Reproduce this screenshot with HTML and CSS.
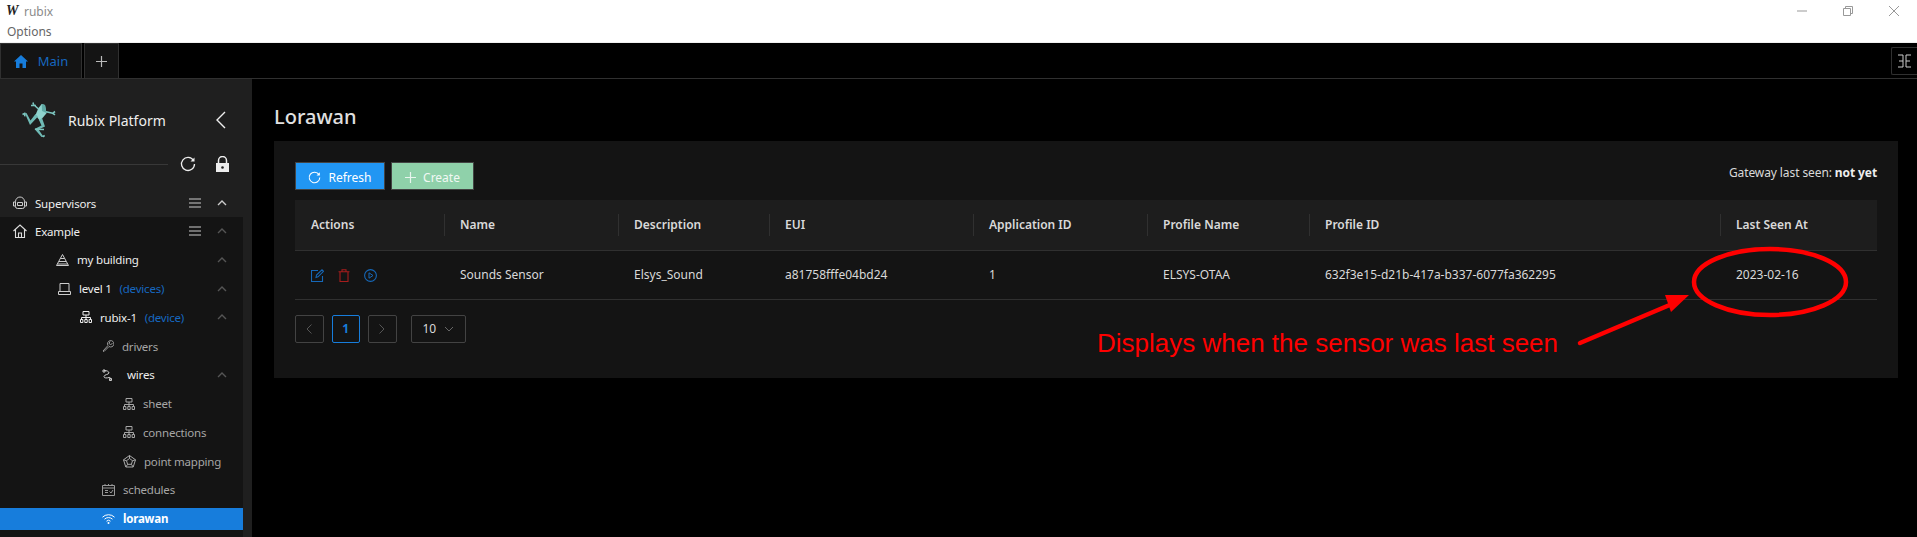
FILE: index.html
```html
<!DOCTYPE html>
<html lang="en">
<head>
  <meta charset="UTF-8">
  <title>rubix</title>
  <link rel="stylesheet" href="styles.css">
</head>
<body>
  <svg class="sprites" width="0" height="0">
    <symbol id="i-chev" viewBox="0 0 10 6"><path d="M1 5l4-4 4 4" fill="none" stroke="currentColor" stroke-width="1.4"/></symbol>
    <symbol id="i-menu" viewBox="0 0 12 10"><path d="M0 1h12M0 5h12M0 9h12" fill="none" stroke="currentColor" stroke-width="1.2"/></symbol>
    <symbol id="i-net" viewBox="0 0 12 12"><path d="M3 .5h6v3.5H3zM6 4v2.5M1.5 8.500V6.500h9v2M.5 8.500h2.400v3H.5zM4.800 8.500h2.400v3H4.800zM9.100 8.500h2.400v3H9.100zM6 6.500v2" fill="none" stroke="currentColor"/></symbol>
    <symbol id="i-refresh" viewBox="0 0 16 16"><path d="M13.500 4.500A6.500 6.500 0 1 0 14.500 8" fill="none" stroke="currentColor" stroke-width="1.300"/><path d="M14.500 1.500v4h-4z" fill="currentColor"/></symbol>
  </svg>

  <header class="titlebar">
    <span class="app-icon">W</span>
    <span class="app-name">rubix</span>
    <div class="window-btns">
      <svg width="10" height="10" viewBox="0 0 10 10"><path d="M0 5h10" stroke="#999"/></svg>
      <svg width="10" height="10" viewBox="0 0 10 10"><path d="M.5 2.500h7v7h-7zM2.500 2.500v-2h7v7h-2" fill="none" stroke="#999"/></svg>
      <svg width="10" height="10" viewBox="0 0 10 10"><path d="M0 0l10 10M10 0L0 10" stroke="#999"/></svg>
    </div>
  </header>
  <div class="menubar">Options</div>

  <nav class="tabs">
    <div class="tab tab-main">
      <svg width="14" height="13" viewBox="0 0 14 13"><path d="M7 0L0 6.500h2V13h3.500V8.500h3V13H12V6.500h2z" fill="#177ddc"/></svg>
      <span>Main</span>
    </div>
    <div class="tab tab-add">
      <svg width="11" height="11" viewBox="0 0 11 11"><path d="M5.500 0v11M0 5.500h11" stroke="#bbb" stroke-width="1.200"/></svg>
    </div>
    <div class="tab-layout">
      <svg width="15" height="14" viewBox="0 0 15 14"><path d="M1 1h5v12H1M14 1H9v12h5M2 7h4M9 7h4" fill="none" stroke="#ccc"/></svg>
    </div>
  </nav>

  <div class="workspace">
    <aside class="sidebar">
      <div class="brand">
        <svg class="frog" width="36" height="36" viewBox="0 0 36 36">
          <polygon points="19.700,2 23,3 24.500,11.300 18,19 13.500,13 16.300,6.300" fill="#8fd3cd"/>
          <polygon points="19.700,2 23,3 24.500,11 20,9" fill="#5fa9a4"/>
          <polygon points="13.500,12 16,14.500 8,23 3,11.500 4.500,11 8.500,18.500" fill="#6fbab5"/>
          <polygon points="17,18 20,16 23,24.500 16.500,27.500 21.500,34.700 19.500,35 12.500,27 19.500,23.500" fill="#6fbab5"/>
          <path d="M16.500 7L11.500 2.500M9 3.500h5M11.500 2.500L11 .5M.5 12.500l3-1.500M3 11.300l-.3 3M24 9.700l6.700 1.600M30.700 11.300l2.300-1.800M30.700 11.300l2.300 1.500M20.700 34.700l2-1.200M13 27.300l9 .2" fill="none" stroke="#7cc5bf" stroke-width="1.600"/>
        </svg>
        <span class="brand-name">Rubix Platform</span>
        <svg class="brand-back" width="11" height="18" viewBox="0 0 11 18"><path d="M10 1L2 9l8 8" fill="none" stroke="#eee" stroke-width="1.400"/></svg>
      </div>
      <div class="tools">
        <div class="tools-line"></div>
        <svg class="tool-refresh" width="16" height="16"><use href="#i-refresh"/></svg>
        <svg class="tool-lock" width="15" height="16" viewBox="0 0 15 16"><path d="M3.500 7V4.500a4 4 0 0 1 8 0V7" fill="none" stroke="#eee" stroke-width="1.500"/><path d="M1 7h13v9H1z" fill="#eee"/><circle cx="7.500" cy="11.500" r="1.300" fill="#1f1f1f"/></svg>
      </div>
      <div class="sup-wrap">
        <div class="row row-top">
          <svg class="row-icon" width="14" height="14" viewBox="0 0 14 14"><path d="M2.500 5.500a4.500 4.500 0 0 1 9 0v5a2 2 0 0 1-2 2h-5a2 2 0 0 1-2-2zM.5 6h2v4h-2zM11.500 6h2v4h-2zM4.500 6.500h5v3h-5z" fill="none" stroke="#ccc"/></svg>
          <span class="row-text">Supervisors</span>
          <svg class="row-menu" width="12" height="10"><use href="#i-menu"/></svg>
          <svg class="row-chev chev-bright" width="10" height="6"><use href="#i-chev"/></svg>
        </div>
      </div>
      <div class="tree">
        <div class="row row-top">
          <svg class="row-icon" width="14" height="14" viewBox="0 0 14 14"><path d="M.5 7L7 1l6.500 6M2.500 5.500v8h9v-8M5.500 13.500V9h3v4.500" fill="none" stroke="#ddd" stroke-width="1.100"/></svg>
          <span class="row-text">Example</span>
          <svg class="row-menu" width="12" height="10"><use href="#i-menu"/></svg>
          <svg class="row-chev" width="10" height="6"><use href="#i-chev"/></svg>
        </div>
        <div class="row lvl-1">
          <svg class="row-icon" width="13" height="12" viewBox="0 0 13 12"><path d="M6.500 .5L12.500 11.500H.5zM4.500 4.500h4M3 7.500h7M1.500 10h10" fill="none" stroke="#ccc"/></svg>
          <span class="row-text">my building</span>
          <svg class="row-chev" width="10" height="6"><use href="#i-chev"/></svg>
        </div>
        <div class="row lvl-2">
          <svg class="row-icon" width="13" height="12" viewBox="0 0 13 12"><path d="M2 .5h9v8H2zM.5 8.500h12v3H.5z" fill="none" stroke="#ccc"/></svg>
          <span class="row-text">level 1 <em class="row-tag">(devices)</em></span>
          <svg class="row-chev" width="10" height="6"><use href="#i-chev"/></svg>
        </div>
        <div class="row lvl-3">
          <svg class="row-icon" width="12" height="12"><use href="#i-net"/></svg>
          <span class="row-text">rubix-1 <em class="row-tag">(device)</em></span>
          <svg class="row-chev" width="10" height="6"><use href="#i-chev"/></svg>
        </div>
        <div class="row lvl-4 row-dim">
          <svg class="row-icon" width="12" height="12" viewBox="0 0 12 12"><path d="M1 11l5-5.500a3.200 3.200 0 1 1 1 1L2 11.500zM8 1.500l-1 2 1.500 1 2-1" fill="none" stroke="#999"/></svg>
          <span class="row-text">drivers</span>
        </div>
        <div class="row lvl-4 row-wires">
          <svg class="row-icon" width="11" height="12" viewBox="0 0 11 12"><path d="M2 1.500c3 0 5 1 5 2.500S2 5.500 2 7.500 5 9 7 8.500s2 2 .5 2.500M1 1h2v2H1zM7.500 9.500h2v2h-2z" fill="none" stroke="#ccc"/></svg>
          <span class="row-text">wires</span>
          <svg class="row-chev" width="10" height="6"><use href="#i-chev"/></svg>
        </div>
        <div class="row lvl-5 row-dim">
          <svg class="row-icon" width="12" height="12"><use href="#i-net"/></svg>
          <span class="row-text">sheet</span>
        </div>
        <div class="row lvl-5 row-dim">
          <svg class="row-icon" width="12" height="12"><use href="#i-net"/></svg>
          <span class="row-text">connections</span>
        </div>
        <div class="row lvl-5 row-dim">
          <svg class="row-icon" width="13" height="13" viewBox="0 0 13 13"><path d="M6.500 .5l6 4.300-2.300 7.200H2.800L.5 4.800zM6.500 3.500l3 2.200-1.100 3.600H4.600L3.500 5.700zM6.500 .5v3M12.500 4.800l-3 .9M10.200 12L8.400 9.300M2.800 12l1.800-2.700M.5 4.800l3 .9" fill="none" stroke="#aaa"/></svg>
          <span class="row-text">point mapping</span>
        </div>
        <div class="row lvl-4 row-dim">
          <svg class="row-icon" width="13" height="12" viewBox="0 0 13 12"><path d="M.5 1.500h12v10H.5zM.5 4h12M3 0v2M6.500 0v2M10 0v2M3 6.500h3M3 8.500h3M7.500 7.500l1.500 1.500 2-3" fill="none" stroke="#999"/></svg>
          <span class="row-text">schedules</span>
        </div>
        <div class="row lvl-4 row-active">
          <svg class="row-icon" width="13" height="10" viewBox="0 0 13 10"><path d="M.5 3.200a8.500 8.500 0 0 1 12 0M2.500 5.200a5.700 5.700 0 0 1 8 0M4.500 7.200a2.800 2.800 0 0 1 4 0" fill="none" stroke="#fff"/><circle cx="6.500" cy="9" r="1" fill="#fff"/></svg>
          <span class="row-text">lorawan</span>
        </div>
      </div>
    </aside>

    <main class="content">
      <h1 class="page-title">Lorawan</h1>
      <section class="panel">
        <div class="toolbar">
          <button class="btn btn-refresh"><svg width="13" height="13"><use href="#i-refresh"/></svg>Refresh</button>
          <button class="btn btn-create"><svg width="11" height="11" viewBox="0 0 11 11"><path d="M5.500 0v11M0 5.500h11" stroke="#e8f5ee" stroke-width="1.200"/></svg>Create</button>
          <div class="gateway">Gateway last seen: <b>not yet</b></div>
        </div>
        <table class="grid">
          <colgroup>
            <col class="col-actions"><col class="col-name"><col class="col-desc"><col class="col-eui">
            <col class="col-app"><col class="col-profile"><col class="col-pid"><col class="col-seen">
          </colgroup>
          <thead>
            <tr>
              <th>Actions</th><th>Name</th><th>Description</th><th>EUI</th>
              <th>Application ID</th><th>Profile Name</th><th>Profile ID</th><th>Last Seen At</th>
            </tr>
          </thead>
          <tbody>
            <tr>
              <td class="actions">
                <svg width="13" height="13" viewBox="0 0 13 13"><path d="M11.500 7v5.500H.5v-11H7M5 8.500l.5-2.500L11 .8 12.500 2.300 7 7.800z" fill="none" stroke="#1668b8" stroke-width="1.100"/></svg>
                <svg width="12" height="13" viewBox="0 0 12 13"><path d="M.5 2.800h11M4 2.500V.7h4v1.800M2 2.800v9.700h8V2.800" fill="none" stroke="#a61d1d" stroke-width="1.100"/></svg>
                <svg width="13" height="13" viewBox="0 0 13 13"><circle cx="6.500" cy="6.500" r="5.900" fill="none" stroke="#1668b8" stroke-width="1.100"/><path d="M5 3.800l4 2.700-4 2.700z" fill="none" stroke="#1668b8"/></svg>
              </td>
              <td>Sounds Sensor</td>
              <td>Elsys_Sound</td>
              <td>a81758fffe04bd24</td>
              <td>1</td>
              <td>ELSYS-OTAA</td>
              <td>632f3e15-d21b-417a-b337-6077fa362295</td>
              <td>2023-02-16</td>
            </tr>
          </tbody>
        </table>
        <div class="pager">
          <span class="page-btn"><svg width="6" height="10" viewBox="0 0 6 10"><path d="M5.500 .5L1 5l4.500 4.500" fill="none" stroke="#555"/></svg></span>
          <span class="page-btn page-current">1</span>
          <span class="page-btn"><svg width="6" height="10" viewBox="0 0 6 10"><path d="M.5 .5L5 5 .5 9.500" fill="none" stroke="#555"/></svg></span>
          <span class="page-size">10 <svg width="10" height="6" viewBox="0 0 10 6"><path d="M1 1l4 4 4-4" fill="none" stroke="#666"/></svg></span>
        </div>
      </section>
    </main>
  </div>

  <svg class="markup" width="1917" height="537" viewBox="0 0 1917 537">
    <ellipse cx="1770" cy="282" rx="76" ry="33" fill="none" stroke="#f00" stroke-width="4.500"/>
    <path d="M1580 343L1672 304" stroke="#f00" stroke-width="4.500" stroke-linecap="round"/>
    <polygon points="1689,295 1665,295 1671,312" fill="#f00"/>
  </svg>
  <div class="markup-text">Displays when the sensor was last seen</div>
</body>
</html>
```

FILE: styles.css
```css
* {
  box-sizing: border-box;
}

html, body {
  margin: 0;
  height: 100%;
}

body {
  position: relative;
  overflow: hidden;
  background: #000;
  color: #d9d9d9;
  font-family: "Noto Sans", "Open Sans", sans-serif;
  font-size: 12px;
}

.sprites {
  position: absolute;
}

/* window chrome */
.titlebar {
  display: flex;
  align-items: center;
  height: 22px;
  padding-left: 6px;
  background: #fff;
  color: #8a8a8a;
  font-size: 12px;
}

.app-icon {
  width: 12px;
  margin-right: 6px;
  color: #222;
  font-family: "Liberation Serif", serif;
  font-size: 14px;
  font-weight: bold;
  font-style: italic;
}

.window-btns {
  display: flex;
  gap: 36px;
  margin-left: auto;
  padding-right: 18px;
}

.menubar {
  height: 21px;
  padding: 1px 7px 0;
  background: #fff;
  border-bottom: 1px solid #f0f0f0;
  color: #666;
  font-size: 12px;
}

/* tabs */
.tabs {
  display: flex;
  height: 36px;
  border-bottom: 1px solid #303030;
}

.tab {
  display: flex;
  align-items: center;
  justify-content: center;
  background: #141414;
  border: 1px solid #303030;
  border-bottom: none;
}

.tab-main {
  gap: 10px;
  width: 82px;
  color: #1668c0;
  font-size: 13px;
}

.tab-add {
  width: 35px;
  margin-left: 2px;
}

.tab-layout {
  display: flex;
  align-items: center;
  justify-content: center;
  width: 26px;
  height: 28px;
  margin: 4px 0 0 auto;
  border: 1px solid #303030;
  border-right: none;
  border-radius: 2px 0 0 2px;
}

.workspace {
  display: flex;
  height: 458px;
}

/* sidebar */
.sidebar {
  flex: none;
  width: 252px;
  overflow: hidden;
  background: #1f1f1f;
}

.brand {
  display: flex;
  align-items: center;
  height: 71px;
  padding: 11px 0 0 22px;
}

.brand-name {
  width: 101px;
  margin-left: 10px;
  color: #eee;
  font-size: 14px;
  white-space: nowrap;
}

.brand-back {
  margin-left: 46px;
}

.tools {
  display: flex;
  align-items: center;
  height: 28px;
  color: #eee;
}

.tools-line {
  width: 168px;
  height: 1px;
  background: #383838;
}

.tool-refresh {
  margin-left: 12px;
}

.tool-lock {
  margin-left: 19px;
}

.sup-wrap {
  width: 243px;
  height: 39px;
  padding-top: 14px;
}

.tree {
  display: flex;
  flex-direction: column;
  gap: 6.75px;
  width: 243px;
  height: 320px;
  padding-top: 3px;
  background: #141414;
}

.row {
  display: flex;
  flex: none;
  align-items: center;
  height: 22px;
  padding-right: 16px;
  color: #eee;
  font-size: 11.500px;
  letter-spacing: -0.2px;
  white-space: nowrap;
}

.row-icon {
  flex: none;
  margin-right: 8px;
}

.row-top {
  padding-left: 13px;
}

.lvl-1 {
  padding-left: 56px;
}

.lvl-2 {
  padding-left: 58px;
}

.lvl-3 {
  padding-left: 80px;
}

.lvl-4 {
  padding-left: 102px;
}

.lvl-5 {
  padding-left: 123px;
}

.row-wires .row-icon {
  margin-right: 14px;
}

.row-dim {
  color: #a6a6a6;
}

.row-active {
  background: #177ddc;
  color: #fff;
  font-weight: 700;
}

.row-tag {
  margin-left: 5px;
  color: #1668c0;
  font-style: normal;
}

.row-menu {
  margin-left: auto;
  color: #ccc;
}

.row-chev {
  margin-left: auto;
  color: #555;
}

.row-menu + .row-chev {
  margin-left: 16px;
}

.chev-bright {
  color: #ccc;
}

/* main content */
.content {
  flex: 1;
  padding: 0 19px 0 22px;
}

.page-title {
  height: 62px;
  margin: 0;
  padding-top: 23px;
  color: #e0e0e0;
  font-size: 20px;
  font-weight: 500;
  line-height: 30px;
}

.panel {
  height: 237px;
  padding: 21px;
  background: #141414;
}

.toolbar {
  display: flex;
  gap: 6px;
  height: 38px;
}

.btn {
  display: flex;
  align-items: center;
  justify-content: center;
  gap: 7px;
  height: 28px;
  padding: 2px 0 0;
  border: 1px solid #434343;
  color: #fff;
  font-family: inherit;
  font-size: 12px;
}

.btn-refresh {
  width: 90px;
  background: #2196f3;
}

.btn-create {
  width: 83px;
  background: #8fd1aa;
  color: #f1f8f4;
}

.gateway {
  margin-left: auto;
  padding-top: 1px;
  letter-spacing: -0.1px;
  line-height: 20px;
}

.gateway b {
  color: #eee;
}

.grid {
  width: 100%;
  border-collapse: collapse;
  table-layout: fixed;
}

.col-actions { width: 149px; }
.col-name { width: 174px; }
.col-desc { width: 151px; }
.col-eui { width: 204px; }
.col-app { width: 174px; }
.col-profile { width: 162px; }
.col-pid { width: 411px; }
.col-seen { width: 157px; }

.grid th {
  position: relative;
  height: 50px;
  padding: 0 16px;
  background: #1d1d1d;
  border-bottom: 1px solid #303030;
  color: #d9d9d9;
  font-size: 12px;
  font-weight: 600;
  text-align: left;
}

.grid th + th::before {
  content: "";
  position: absolute;
  top: 14px;
  bottom: 14px;
  left: 0;
  width: 1px;
  background: #303030;
}

.grid td {
  height: 49px;
  padding: 0 16px;
  border-bottom: 1px solid #303030;
  font-size: 12px;
}

.actions svg {
  margin-right: 11px;
  vertical-align: middle;
}

.pager {
  display: flex;
  gap: 8px;
  margin-top: 15px;
}

.page-btn {
  display: flex;
  align-items: center;
  justify-content: center;
  width: 28.500px;
  height: 28px;
  border: 1px solid #434343;
  border-radius: 2px;
}

.page-current {
  border-color: #177ddc;
  color: #177ddc;
  font-weight: 700;
}

.page-size {
  display: flex;
  align-items: center;
  gap: 8px;
  width: 55px;
  height: 28px;
  margin-left: 6px;
  padding-left: 11px;
  border: 1px solid #434343;
  border-radius: 2px;
}

/* red annotation drawn on top of the screenshot */
.markup {
  position: absolute;
  top: 0;
  left: 0;
  pointer-events: none;
}

.markup-text {
  position: absolute;
  top: 328px;
  left: 1097px;
  color: #f00;
  font-family: "Liberation Sans", Arial, sans-serif;
  font-size: 26px;
  line-height: 30px;
  white-space: nowrap;
}
```
